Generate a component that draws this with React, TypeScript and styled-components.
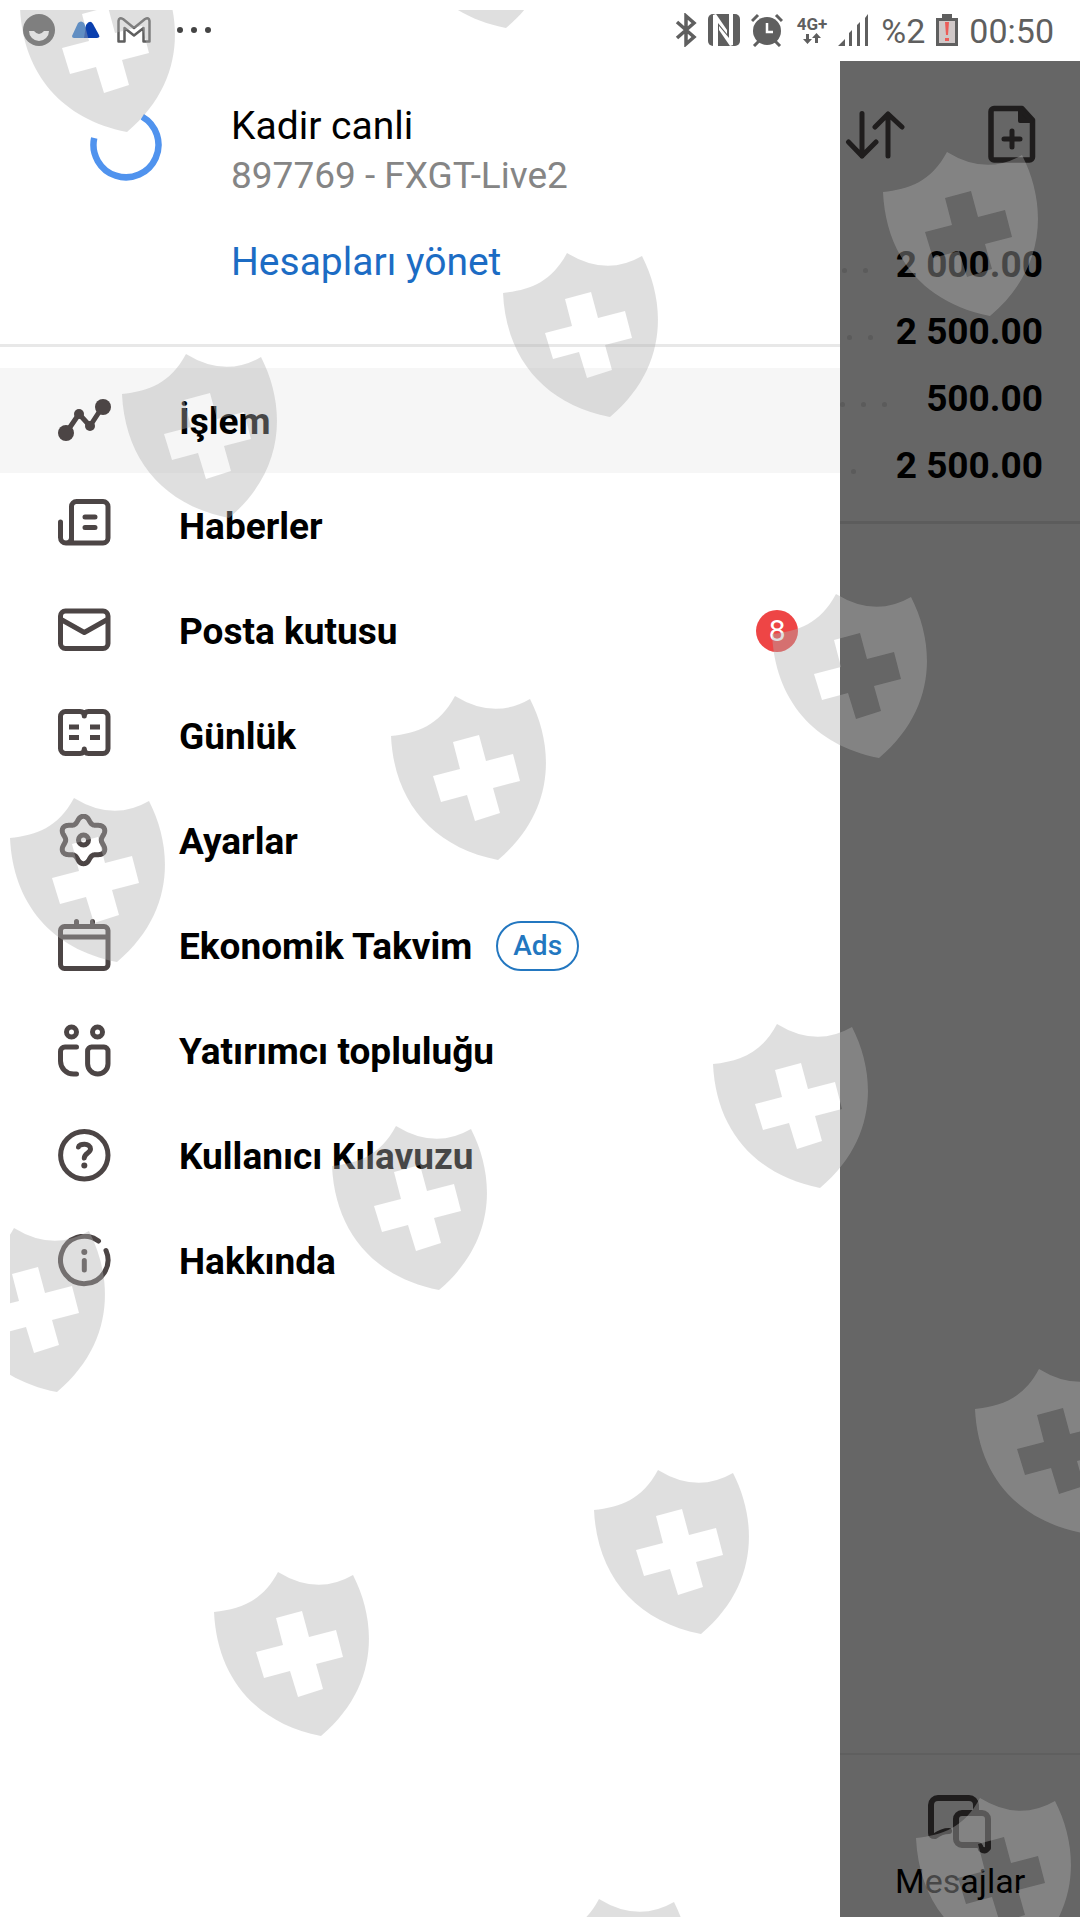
import React from "react";
import styled, { createGlobalStyle } from "styled-components";

const GlobalStyle = createGlobalStyle`
  * { box-sizing: border-box; }
  body { margin: 0; background: #fff; font-family: Roboto, "Noto Sans", sans-serif; }
`;

const Page = styled.div`
  position: relative;
  display: flex;
  flex-direction: column;
  min-height: 100vh;
  overflow: hidden;
`;

const StatusBar = styled.header`
  display: flex;
  align-items: center;
  justify-content: space-between;
  height: 61px;
  padding: 0 26px 2px 23px;
  color: #5f5f5f;
`;

const StatusGroup = styled.div<{ $gap: number }>`
  display: flex;
  align-items: center;
  gap: ${(p) => p.$gap}px;
`;

const StatusText = styled.span`
  padding-top: 2px;
  font-size: 34px;
  line-height: 40px;
`;

const Network = styled.span`
  display: flex;
  flex-direction: column;
  align-items: center;
  padding-left: 3px;
  font-size: 17px;
  line-height: 18px;
  font-weight: 700;
`;

const Body = styled.div`
  display: flex;
  flex: 1;
`;

const Drawer = styled.aside`
  flex: 0 0 77.8%;
  background: #fff;
`;

const Profile = styled.section`
  display: grid;
  grid-template-columns: 141px 1fr;
  padding: 40px 0 0 90px;
  height: 286px;
  border-bottom: 3px solid #e8e8e8;
`;

const SpinnerBox = styled.div`
  padding-top: 8px;
`;

const AccountInfo = styled.div`
  display: flex;
  flex-direction: column;
  align-items: flex-start;
`;

const AccountName = styled.strong`
  font-size: 39px;
  line-height: 50px;
  font-weight: 400;
  color: #000;
`;

const AccountId = styled.span`
  font-size: 37px;
  line-height: 50px;
  color: #858585;
`;

const ManageLink = styled.a`
  margin-top: 36px;
  font-size: 39px;
  line-height: 50px;
  color: #1c6cc4;
  text-decoration: none;
`;

const Menu = styled.nav`
  display: flex;
  flex-direction: column;
  padding-top: 21px;
`;

const MenuItem = styled.button<{ $active?: boolean }>`
  display: flex;
  align-items: center;
  height: 105px;
  padding: 0 42px 0 58px;
  border: 0;
  background: ${(p) => (p.$active ? "#f6f6f6" : "transparent")};
  font-family: inherit;
  text-align: left;
`;

const MenuLabel = styled.span`
  margin-left: 68px;
  padding-top: 3px;
  font-size: 37px;
  line-height: 44px;
  font-weight: 700;
  color: #000;
`;

const AdsTag = styled.span`
  margin-left: 24px;
  padding: 0 15px;
  border: 2px solid #2377c0;
  border-radius: 25px;
  font-size: 28px;
  line-height: 46px;
  font-weight: 500;
  color: #2377c0;
`;

const CountBadge = styled.span`
  margin-left: auto;
  width: 42px;
  border-radius: 21px;
  background: #ee4545;
  color: #fff;
  font-size: 30px;
  line-height: 42px;
  text-align: center;
`;

const Backdrop = styled.main`
  display: flex;
  flex: 1;
  flex-direction: column;
  min-width: 0;
  background: #666;
`;

const Toolbar = styled.div`
  display: flex;
  justify-content: space-between;
  padding: 44px 44px 0 5px;
`;

const IconButton = styled.button`
  display: flex;
  padding: 0;
  border: 0;
  background: none;
`;

const Balances = styled.div`
  padding: 68px 37px 22px 0;
  border-bottom: 3px solid #5c5c5c;
`;

const BalanceRow = styled.div`
  display: flex;
  align-items: center;
  justify-content: space-between;
  height: 67px;
`;

const Leader = styled.span<{ $inset: number }>`
  display: flex;
  gap: 16px;
  padding: 12px 0 0 ${(p) => p.$inset}px;
`;

const Dot = styled.i`
  width: 5px;
  height: 5px;
  border-radius: 3px;
  background: #5b5b5b;
`;

const Amount = styled.span`
  font-size: 37px;
  line-height: 44px;
  font-weight: 700;
  color: #000;
`;

const TabBar = styled.footer`
  display: flex;
  justify-content: center;
  margin-top: auto;
  padding: 40px 0 14px;
  border-top: 2px solid #5f5f5f;
`;

const Tab = styled.button`
  display: flex;
  flex-direction: column;
  align-items: center;
  gap: 4px;
  padding: 0;
  border: 0;
  background: none;
  font-family: inherit;
  font-size: 34px;
  line-height: 44px;
  color: #000;
`;

const Watermark = styled.div`
  position: absolute;
  inset: 10px 0 0 10px;
  overflow: hidden;
  pointer-events: none;
`;

const ShieldMark = styled.svg<{ $x: number; $y: number }>`
  position: absolute;
  left: ${(p) => p.$x - 10}px;
  top: ${(p) => p.$y - 10}px;
  fill: rgba(176, 176, 176, 0.405);
`;

const shields = [
  [20, -32], [399, -136], [883, 152], [503, 253], [122, 354],
  [772, 594], [391, 696], [10, 798], [713, 1024], [332, 1126],
  [-50, 1228], [975, 1369], [594, 1470], [214, 1572], [916, 1798],
  [535, 1899],
];

const Shield = ({ x, y }: { x: number; y: number }) => (
  <ShieldMark $x={x} $y={y} width="158" height="166" viewBox="0 0 158 166" aria-hidden="true">
    <path
      fillRule="evenodd"
      d="M0 40C26 37 48 30 64 0Q103 24 139 3C164 52 164 116 107 164C41 151 3 105 0 40ZM62 46L88 39L95 65L122 58L129 85L102 92L109 117L84 125L76 99L50 106L42 80L69 73Z"
    />
  </ShieldMark>
);

const gearPath =
  Array.from({ length: 120 }, (_, i) => {
    const a = (i / 120) * Math.PI * 2;
    const lobe = Math.cos(6 * a);
    const r = 20.8 + 3 * Math.sign(lobe) * Math.pow(Math.abs(lobe), 0.9);
    return `${i ? "L" : "M"}${(25.5 + r * Math.sin(a)).toFixed(2)} ${(26 - r * Math.cos(a)).toFixed(2)}`;
  }).join("") + "Z";

const MenuIcon = ({ children }: { children: React.ReactNode }) => (
  <svg width="53" height="53" viewBox="0 0 53 53" fill="none" stroke="#4c4545" strokeWidth="5" strokeLinecap="round" strokeLinejoin="round" aria-hidden="true">
    {children}
  </svg>
);

const icons: Record<string, React.ReactNode> = {
  trade: (
    <>
      <path d="M8 39L21 20L32 32L45 12" />
      <g fill="#4c4545" stroke="none">
        <circle cx="8" cy="39" r="8" />
        <circle cx="21" cy="20" r="5" />
        <circle cx="32" cy="32" r="5" />
        <circle cx="45" cy="13" r="8" />
      </g>
    </>
  ),
  news: <path d="M19 2.5H45a5 5 0 0 1 5 5V39a5 5 0 0 1-5 5H8A5.5 5.5 0 0 1 2.5 38.5V23M13.5 41V7.5a5 5 0 0 1 5-5M13.5 38.500A5.5 5.5 0 0 1 8 44M27 18H37M27 28.5H37" />,
  mail: <><rect x="2.5" y="7" width="47.5" height="37.5" rx="5" /><path d="M4 16L26.3 28.5L48.5 16" /></>,
  journal: (
    <>
      <path d="M7.5 2.5H22Q26.3 2.5 26.3 7Q26.3 2.5 30.5 2.5H45a5 5 0 0 1 5 5V39.5a5 5 0 0 1-5 5H30.5Q26.3 44.5 26.3 40Q26.3 44.5 22 44.5H7.5a5 5 0 0 1-5-5V7.5a5 5 0 0 1 5-5Z" />
      <path strokeLinecap="butt" d="M11 18H21M11 28.5H21M32 18H42M32 28.5H42" />
    </>
  ),
  settings: <><path d={gearPath} /><circle cx="25.5" cy="26" r="5" /></>,
  calendar: <><rect x="2.5" y="7.5" width="47.5" height="42" rx="4" /><path d="M4 18H48M18.5 2.5V7M34.5 2.5V7" /></>,
  community: (
    <>
      <circle cx="13.5" cy="8" r="5" />
      <circle cx="39.5" cy="8" r="5" />
      <path d="M18.5 23H7a4.500 4.500 0 0 0-4.500 4.500V37A13 13 0 0 0 15.5 50H18.5" />
      <path d="M33.5 23H46a4 4 0 0 1 4 4V39.800a10.200 10.200 0 0 1-20.400 0V27a4 4 0 0 1 4-4Z" />
    </>
  ),
  help: (
    <>
      <circle cx="26.3" cy="26.3" r="23.700" />
      <path d="M20.5 18C21 14.500 32.500 13.500 32.500 20C32.500 24 26.500 24 26.300 29" />
      <circle cx="26.3" cy="36.5" r="3" fill="#4c4545" stroke="none" />
    </>
  ),
  info: (
    <>
      <path d="M40.500 7A23.700 23.700 0 1 0 48 16.500M26.300 26.500V36" />
      <circle cx="26.3" cy="18" r="3" fill="#4c4545" stroke="none" />
    </>
  ),
};

const menu = [
  { id: "trade", label: "İşlem" },
  { id: "news", label: "Haberler" },
  { id: "mail", label: "Posta kutusu", count: 8 },
  { id: "journal", label: "Günlük" },
  { id: "settings", label: "Ayarlar" },
  { id: "calendar", label: "Ekonomik Takvim", ad: true },
  { id: "community", label: "Yatırımcı topluluğu" },
  { id: "help", label: "Kullanıcı Kılavuzu" },
  { id: "info", label: "Hakkında" },
];

const balances = [
  { amount: "2 000.00", inset: 2, dots: 2 },
  { amount: "2 500.00", inset: 7, dots: 2 },
  { amount: "500.00", inset: 0, dots: 3 },
  { amount: "2 500.00", inset: 11, dots: 1 },
];

export default function App() {
  return (
    <Page>
      <GlobalStyle />
      <StatusBar>
        <StatusGroup $gap={17}>
          <svg width="32" height="32" viewBox="0 0 32 32" aria-hidden="true">
            <circle cx="16" cy="16" r="16" fill="#5f5f5f" />
            <path d="M6 17H11Q16 23 21 17H26A10 10 0 0 1 6 17Z" fill="#fff" />
          </svg>
          <svg width="28" height="18" viewBox="0 0 28 18" aria-hidden="true">
            <path d="M0 15L6 2Q9-1 12 2L18 17H2Q0 17 0 15Z" fill="#2c78cf" />
            <path d="M12 17L14 4Q18-2 21 3L27 14Q28 17 25 17Z" fill="#0a3fae" />
          </svg>
          <svg width="34" height="26" viewBox="0 0 34 26" fill="none" stroke="#5f5f5f" strokeWidth="2.5" strokeLinejoin="round" aria-hidden="true">
            <path d="M1.5 24.5V4Q2 0 6 2L17 11L28 2Q32 0 32.5 4V24.5H26.5V11L17 18.500L7.5 11V24.5Z" />
          </svg>
          <svg width="54" height="8" viewBox="0 0 54 8" fill="#444" aria-hidden="true">
            <circle cx="12" cy="4" r="3" /><circle cx="26" cy="4" r="3" /><circle cx="40" cy="4" r="3" />
          </svg>
        </StatusGroup>
        <StatusGroup $gap={11}>
          <svg width="22" height="34" viewBox="0 0 22 34" fill="none" stroke="#5f5f5f" strokeWidth="3.5" aria-hidden="true">
            <path d="M2 9L19 24L11 31V3L19 10L2 25" />
          </svg>
          <svg width="32" height="34" viewBox="0 0 32 34" aria-hidden="true">
            <rect y="1" width="32" height="32" rx="5" fill="#5f5f5f" />
            <path d="M5 33V2L8 1L19 17V21L10 10V33ZM25 1V32L22 33L11 17V13L21 25V1Z" fill="#fff" />
          </svg>
          <svg width="32" height="34" viewBox="0 0 32 34" aria-hidden="true">
            <circle cx="16" cy="18" r="14" fill="#5f5f5f" />
            <path d="M1 8L7 2M31 8L25 2M3 33L8 28M29 33L24 28" stroke="#5f5f5f" strokeWidth="3" />
            <path d="M16 10V19H22" fill="none" stroke="#fff" strokeWidth="2.5" />
          </svg>
          <Network>
            4G+
            <svg width="18" height="12" viewBox="0 0 18 12" fill="#5f5f5f" aria-hidden="true">
              <path d="M3 1H6V6H9L4.500 11L0 6H3ZM12 10H15V5H18L13.500 0L9 5H12Z" />
            </svg>
          </Network>
          <svg width="32" height="34" viewBox="0 0 32 34" fill="#5f5f5f" aria-hidden="true">
            <path d="M0 33L7 26V33ZM11 20L14 17V33H11ZM19 12L22 9V33H19ZM27 5L30 1V33H27Z" />
          </svg>
          <StatusText>%2</StatusText>
          <svg width="22" height="34" viewBox="0 0 22 34" aria-hidden="true">
            <path d="M6 1H16V5H22V33H0V5H6Z" fill="#5f5f5f" />
            <path d="M3 8H19V30H3Z" fill="#d0c8c8" />
            <path d="M9 9H13L12 22H10ZM9 25H13V28H9Z" fill="#ec5c58" />
          </svg>
          <StatusText>00:50</StatusText>
        </StatusGroup>
      </StatusBar>

      <Body>
        <Drawer>
          <Profile>
            <SpinnerBox>
              <svg width="72" height="72" viewBox="0 0 72 72" fill="none" stroke="#5093ee" strokeWidth="6.5" role="img" aria-label="Yükleniyor">
                <path d="M4.2 29A32.500 32.500 0 1 0 52.300 7.700" />
              </svg>
            </SpinnerBox>
            <AccountInfo>
              <AccountName>Kadir canli</AccountName>
              <AccountId>897769 - FXGT-Live2</AccountId>
              <ManageLink href="#accounts">Hesapları yönet</ManageLink>
            </AccountInfo>
          </Profile>
          <Menu>
            {menu.map((m, i) => (
              <MenuItem key={m.id} type="button" $active={i === 0}>
                <MenuIcon>{icons[m.id]}</MenuIcon>
                <MenuLabel>{m.label}</MenuLabel>
                {m.ad && <AdsTag>Ads</AdsTag>}
                {m.count && <CountBadge>{m.count}</CountBadge>}
              </MenuItem>
            ))}
          </Menu>
        </Drawer>

        <Backdrop>
          <Toolbar>
            <IconButton type="button" aria-label="Sırala">
              <svg width="62" height="58" viewBox="0 0 62 58" fill="none" stroke="#1f1d1d" strokeWidth="5" strokeLinecap="round" strokeLinejoin="round">
                <path d="M17 8.5V51M3.5 37L17 51L31 37M43 51V9M30 22L43 9L57 22" />
              </svg>
            </IconButton>
            <IconButton type="button" aria-label="Yeni emir">
              <svg width="48" height="58" viewBox="0 0 48 58" fill="none" stroke="#1f1d1d" strokeWidth="5.5" strokeLinecap="round" strokeLinejoin="round">
                <path d="M6 3.5H34L44.5 15V52a3 3 0 0 1-3 3H6a3 3 0 0 1-3-3V6.5a3 3 0 0 1 3-3Z" />
                <path d="M32 5V16H44Z" fill="#1f1d1d" strokeWidth="4" />
                <path d="M24 26V42M16 34H32" strokeWidth="5" />
              </svg>
            </IconButton>
          </Toolbar>
          <Balances>
            {balances.map((b, i) => (
              <BalanceRow key={i}>
                <Leader $inset={b.inset}>
                  {Array.from({ length: b.dots }, (_, n) => <Dot key={n} />)}
                </Leader>
                <Amount>{b.amount}</Amount>
              </BalanceRow>
            ))}
          </Balances>
          <TabBar>
            <Tab type="button">
              <svg width="64" height="60" viewBox="0 0 64 60" fill="none" stroke="#1f1d1d" strokeWidth="6" strokeLinecap="round" strokeLinejoin="round" aria-hidden="true">
                <path d="M21 36Q14 36 7 41Q3 41 3 38V10a7 7 0 0 1 7-7H41a7 7 0 0 1 7 7V16" />
                <path d="M34 18H54a6 6 0 0 1 6 6V53Q57 57 53 54Q52 50 50 50H34a6 6 0 0 1-6-6V24a6 6 0 0 1 6-6Z" />
              </svg>
              Mesajlar
            </Tab>
          </TabBar>
        </Backdrop>
      </Body>

      <Watermark>
        {shields.map(([x, y]) => <Shield key={`${x}:${y}`} x={x} y={y} />)}
      </Watermark>
    </Page>
  );
}
